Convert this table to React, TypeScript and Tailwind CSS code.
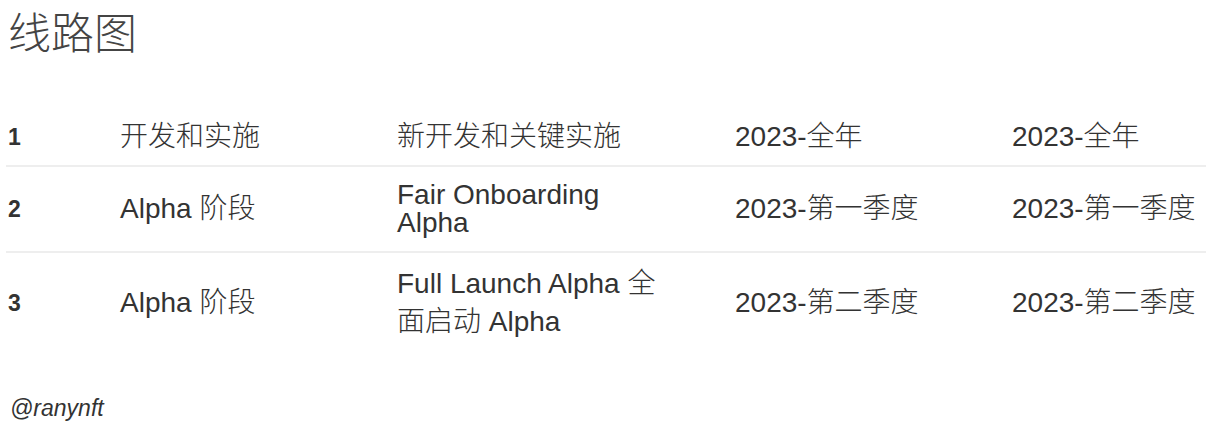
const rows = [
  { n: "1", phase: "开发和实施", item: "新开发和关键实施", start: "2023-全年", end: "2023-全年", tall: false },
  { n: "2", phase: "Alpha 阶段", item: "Fair Onboarding Alpha", start: "2023-第一季度", end: "2023-第一季度", tall: false },
  { n: "3", phase: "Alpha 阶段", item: "Full Launch Alpha 全面启动 Alpha", start: "2023-第二季度", end: "2023-第二季度", tall: true },
]

export default function App() {
  return (
    <div
      className="min-h-screen bg-white text-[#333]"
      style={{ fontFamily: '"Liberation Sans", "Noto Sans CJK SC", sans-serif' }}
    >
      <h1 className="pl-2 pt-[10px] text-[43px] leading-[48px] font-light text-[#444]">线路图</h1>

      <div className="mx-[6px] mt-[51px] w-[1200px]">
        {rows.map((r, i) => (
          <div
            key={r.n}
            className={
              "grid grid-cols-[112px_277px_338px_277px_196px] items-center text-[28px] leading-[28px] font-light " +
              (r.tall ? "py-[12px] " : "py-[14px] ") +
              (i < rows.length - 1 ? "border-b-2 border-[#eee]" : "")
            }
          >
            <div className="pl-[2px] text-[23px] font-bold">{r.n}</div>
            <div className="pl-[2px]">{r.phase}</div>
            <div className={"pl-[2px] pr-[66px] " + (r.tall ? "leading-[38px]" : "")}>{r.item}</div>
            <div className="pl-[2px]">{r.start}</div>
            <div className="pl-[2px]">{r.end}</div>
          </div>
        ))}
      </div>

      <p className="pl-[10px] mt-[38px] text-[23px] italic text-[#333]">@ranynft</p>
    </div>
  )
}
